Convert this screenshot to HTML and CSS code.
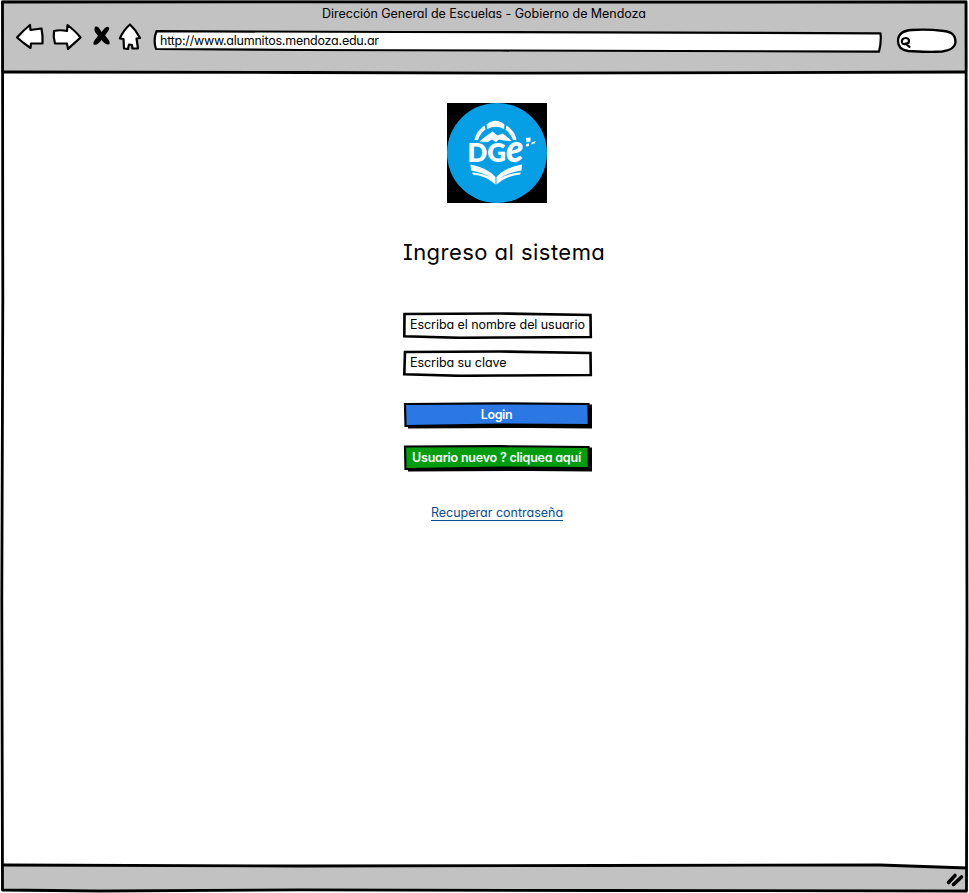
FILE: index.html
```html
<!DOCTYPE html>
<html lang="es">
<head>
<meta charset="utf-8">
<title>Dirección General de Escuelas - Gobierno de Mendoza</title>
<link rel="stylesheet" href="styles.css">
</head>
<body>
<div class="window">
  <header class="chrome">
    <div class="window-title"><span class="t-title">Dirección General de Escuelas - Gobierno de Mendoza</span></div>
    <div class="toolbar">
      <svg class="nav-icons" width="154" height="40" viewBox="0 20 154 40">
        <g fill="#fff" stroke="#000" stroke-width="2.2" stroke-linejoin="round" stroke-linecap="round">
          <path d="M17 37.500C21 33 25 29 30 25L30.500 30L41.500 28.500Q43 36 42.500 43.500L31 43.500L30.500 48C26 45 21 41 17 37.500Z"/>
          <path d="M54 31Q60 29.500 67 31L67.500 25C72 28.500 77 33 80.500 37.500C77 41 72 45 68 49L67 43.500L55 43.500Q53 37 54 31Z"/>
          <path d="M130 24.500Q136 30 140 38L136.500 38.500L138 48.500L132.500 48.500L132 45L129 44.500L128 49L124 48.500L123.500 39L119.800 38.500Q123.500 30 130 24.500Z"/>
        </g>
        <path d="M95 27C98 25 100 29.500 101.500 32C104 29 106.500 25 109 27.500C110 30 107 32.500 105 35.500C107.500 38.500 110.500 41 109.500 44C106.500 46 103.500 42 101.500 40C99.500 42.500 96.500 46 93.500 44.500C93 41 96 39 98 35.500C95.500 33 93.500 30.500 95 27Z"/>
      </svg>
      <div class="address">
        <svg class="sketch" width="730" height="24" viewBox="152 29 730 24"><path d="M156.500 31.200L400 32L600 32.400L880.500 33.300Q881.500 42 879 51.600L500 50.500L300 50L156 49Q153 40 156.500 31.200Z" fill="#fff" stroke="#000" stroke-width="2.200" stroke-linejoin="round"/></svg>
        <span class="t-url">http://www.alumnitos.mendoza.edu.ar</span>
      </div>
      <svg class="search" width="64" height="28" viewBox="895 27 64 28">
        <path d="M898 41C898 34 903 30.500 912 30C925 29 936 30 944 31C953 32 955.500 36 955.500 42C955 48 950 50.500 942 51.500C930 52.500 918 51.500 908 51C901 50 898 47 898 41Z" fill="#fff" stroke="#000" stroke-width="2.300"/>
        <path d="M908.500 43C909.500 40.500 909 38.300 906 38C903 37.800 901.300 40 902 42.500C902.800 45 906 44.500 908 43M905.500 43.500L909.500 46.800" fill="none" stroke="#000" stroke-width="2.200" stroke-linecap="round"/>
      </svg>
    </div>
  </header>
  <main class="page">
    <svg class="logo" width="100" height="100" viewBox="0 0 100 100">
      <rect width="100" height="100"/>
      <circle cx="50" cy="50" r="50" fill="#069fe6"/>
      <g fill="#fff">
        <path d="M39.500 21.500Q48.500 14 57.500 21.500L57 26Q48.500 21.500 40.500 26Z"/>
        <path d="M37.700 22.500Q29 28 27.500 37L31 37Q33 30.500 38.500 26.500Z"/>
        <path d="M59.500 22.500Q68 28 69.500 37L66 37Q63.500 30.500 58.500 26.500Z"/>
        <path d="M32.500 38.500Q38 33.500 45.500 28.500L50.500 32.500L55.500 30.500Q61 34 64.500 38L57 37.500L52 36.500L49 39L45 36.500L41 39Z"/>
        <path d="M23.500 61.500Q40 64.500 48.500 74L48.500 81.500Q38 72.500 26 71.500L25 69.500Q38 70.500 45 75.500Q38 70 24 67.500Z"/>
        <path d="M75 61.500Q58 64.500 49.500 74L49.500 81.500Q60 72.500 73 71.500L74 69.500Q60 70.500 53 75.500Q60 70 74.500 67.500Z"/>
        <path d="M79 35L83.500 34.500L83.500 38.500L79.500 39ZM84.500 39.500L89 38L87.500 40.500L84.500 41.500ZM79 41L82 40.500L82 43L79 43.500Z"/>
        <text class="logo-word" x="20.500" y="59" textLength="56" lengthAdjust="spacingAndGlyphs">DG<tspan class="logo-e">e</tspan></text>
      </g>
    </svg>
    <h1 class="heading"><span class="t-heading">Ingreso al sistema</span></h1>
    <form class="login">
      <div class="field">
        <svg class="sketch" width="192" height="28" viewBox="402 311 192 28"><path d="M404.500 314L500 313.500L590.500 315L590.800 337L500 337.500L460 337.800L404.300 336.300Z" fill="#fff" stroke="#000" stroke-width="2.600"/></svg>
        <span class="t-user">Escriba el nombre del usuario</span>
      </div>
      <div class="field field-key">
        <svg class="sketch" width="192" height="28" viewBox="402 311 192 28"><path d="M405 314L500 313.500L590.500 315L590.800 337L500 337.500L460 337.800L404.300 336.300Z" fill="#fff" stroke="#000" stroke-width="2.600"/></svg>
        <span class="t-key">Escriba su clave</span>
      </div>
      <div class="button button-login">
        <svg class="sketch" width="192" height="28" viewBox="402 401 192 28"><path d="M407 405L592 404.500L592 428.500L530 428L408 428.500Z"/><path d="M405 404L500 403.400L588.500 404L588.800 425L500 424.500L405.500 426Z" fill="#2b78e4" stroke="#000" stroke-width="2.200"/></svg>
        <span class="t-login">Login</span>
      </div>
      <div class="button button-new">
        <svg class="sketch" width="192" height="28" viewBox="402 401 192 28"><path d="M407 405L592 404.500L592 428.500L530 428L408 428.500Z"/><path d="M405 403.500L500 403.200L588.500 404L588.800 425L500 424.500L405.500 426Z" fill="#009e0f" stroke="#000" stroke-width="2.200"/></svg>
        <span class="t-new">Usuario nuevo ? cliquea aquí</span>
      </div>
    </form>
    <a class="recover"><span class="t-recover">Recuperar contraseña</span></a>
  </main>
  <footer class="status"></footer>
  <svg class="frame" width="969" height="893" viewBox="0 0 969 893">
    <path d="M3 860H967V868L880 865L3 865Z" fill="#fff"/>
    <path d="M0 889.500H969V893H0ZM967.500 0H969V893H967.500ZM0 0H1V893H0Z" fill="#fff"/>
    <g fill="none" stroke="#000" stroke-width="2.800" stroke-linejoin="round">
      <path d="M2.500 2L300 1.800L600 2.200L966 2L966.500 300L967 620L966.500 891L600 890.500L300 889.800L100 891L2.500 890L1.800 600L2.800 300Z"/>
      <path d="M2 72L300 72.500L520 73.200L967 72"/>
      <path d="M2 865L300 866L600 865.500L880 865L967 868"/>
    </g>
    <path d="M948.500 882.500L955 875.500M953.500 884.500L961.500 877" fill="none" stroke="#000" stroke-width="3.600" stroke-linecap="round"/>
  </svg>
</div>
</body>
</html>
```
FILE: styles.css
```css
* { box-sizing: border-box; }
body {
  margin: 0;
  background: #fff;
  color: #000;
  font: 12.5px/18px Inter, "Open Sans", sans-serif;
  font-feature-settings: "cv11" 1;
}
.window {
  position: relative;
  display: flex;
  flex-direction: column;
  width: 969px;
  height: 893px;
  overflow: hidden;
}
.chrome { height: 72px; background: #c2c2c2; }
.window-title { height: 20px; padding: 5px 1px 0 0; text-align: center; white-space: nowrap; }
.t-title { letter-spacing: -0.04px; }
.toolbar { display: flex; height: 40px; }
.nav-icons { flex: none; margin-right: -2px; }
.address { position: relative; width: 730px; height: 24px; margin-top: 9px; padding: 3px 0 0 8px; }
.t-url { letter-spacing: -0.23px; }
.search { margin: 7px 0 0 13px; }
.sketch { position: absolute; left: 0; top: 0; }
.address span, .field span, .button span { position: relative; white-space: nowrap; }
.page { display: flex; flex: 1; flex-direction: column; align-items: center; padding: 31px 0 0 25px; }
.logo { display: block; flex: none; }
.logo-word { font: 800 27px Lato, sans-serif; }
.logo-e { font: italic 900 37px Lato, sans-serif; }
.heading { width: 188px; height: 32px; margin: 33px 0 0; font-size: 22px; font-weight: 400; line-height: 32px; letter-spacing: 0.46px; white-space: nowrap; font-feature-settings: "cv11" 1, "cv08" 1; }
.login { display: flex; flex-direction: column; width: 192px; margin: 43px 0 0 2px; }
.field, .button { position: relative; height: 28px; }
.field { padding: 5px 0 0 8px; }
.field span { letter-spacing: -0.06px; }
.field-key { margin-top: 10px; }
.button { padding: 5px 3px 0 0; color: #fff; font-weight: 600; letter-spacing: -0.22px; text-align: center; }
.button-login { margin-top: 24px; letter-spacing: -0.4px; }
.button-new { margin-top: 15px; }
.recover { margin-top: 33px; color: #084b97; border-bottom: 1px solid #084b97; line-height: 15px; white-space: nowrap; }
.status { height: 28px; background: #c2c2c2; }
.frame { position: absolute; inset: 0; pointer-events: none; }
```
